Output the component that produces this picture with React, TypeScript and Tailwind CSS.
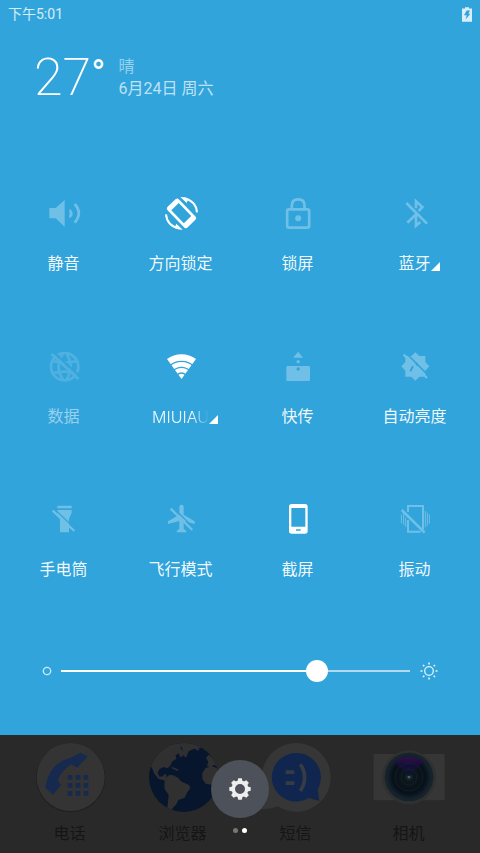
import { useState, type ReactNode } from "react";

type Tile = {
  label: string;
  viewBox: string;
  active?: boolean;
  disabled?: boolean;
  more?: boolean;
  fade?: boolean;
  icon: ReactNode;
};

const tiles: Tile[] = [
  {
    label: "静音",
    viewBox: "78 45 108 108",
    icon: (
      <>
        <path d="M88 84h19l27-24v80l-27-25H88z" fill="currentColor" />
        <path d="M147 88q11 2 11 13t-11 12q4-12 0-25z" fill="currentColor" />
        <path d="M164 72q25 28 0 56" stroke="currentColor" strokeWidth="8" />
      </>
    ),
  },
  {
    label: "方向锁定",
    viewBox: "429 45 108 108",
    active: true,
    icon: (
      <>
        <g transform="rotate(-44 484.500 100)">
          <path
            fill="currentColor"
            fillRule="evenodd"
            d="M468 57h33q7 0 7 7v72q0 7-7 7h-33q-7 0-7-7V64q0-7 7-7zm1 15v54h31V72z"
          />
        </g>
        <path d="M492 55q36 8 39 42" stroke="currentColor" strokeWidth="6" />
        <path d="M481 51q13-1 24 5l-5 13z" fill="currentColor" />
        <path d="M438 103q3 34 39 42" stroke="currentColor" strokeWidth="6" />
        <path d="M488 149q-13 1-24-5l5-13z" fill="currentColor" />
      </>
    ),
  },
  {
    label: "锁屏",
    viewBox: "90 45 108 108",
    icon: (
      <>
        <rect x="111.500" y="88" width="66" height="55" rx="5" stroke="currentColor" strokeWidth="8" />
        <path d="M125.500 85V76q0-18 19-18t19 18v9" stroke="currentColor" strokeWidth="8" />
        <circle cx="144.500" cy="115" r="9" fill="currentColor" />
      </>
    ),
  },
  {
    label: "蓝牙",
    viewBox: "441 45 108 108",
    more: true,
    icon: (
      <path
        d="M469 69l62 62M498 85V64l19 17-11 12M472 128l26-25v34l13-11"
        stroke="currentColor"
        strokeWidth="8"
      />
    ),
  },
  {
    label: "数据",
    viewBox: "78 39 108 108",
    disabled: true,
    icon: (
      <>
        <mask id="globe-cut">
          <rect x="78" y="39" width="108" height="108" fill="#fff" />
          <path d="M100 50l84 78" stroke="#000" strokeWidth="6" />
        </mask>
        <g mask="url(#globe-cut)">
          <path
            stroke="currentColor"
            strokeWidth="8"
            d="M134 54a41 41 0 100 82 41 41 0 000-82zM98 78q36 10 72 0M98 115q36-10 72 0M130 54q-28 41 0 82M138 54q28 41 0 82"
          />
        </g>
        <path d="M95 57l80 75" stroke="currentColor" strokeWidth="8" />
      </>
    ),
  },
  {
    label: "MIUIAU",
    viewBox: "429 39 108 108",
    active: true,
    more: true,
    fade: true,
    icon: (
      <>
        <mask id="wifi-gaps">
          <rect x="429" y="39" width="108" height="108" fill="#fff" />
          <g stroke="#000" strokeWidth="4">
            <circle cx="484.500" cy="132" r="53" />
            <circle cx="484.500" cy="132" r="35" />
            <circle cx="484.500" cy="132" r="18" />
          </g>
        </mask>
        <path mask="url(#wifi-gaps)" d="M484.500 132L441 72a74 74 0 0187 0z" fill="currentColor" />
      </>
    ),
  },
  {
    label: "快传",
    viewBox: "90 39 108 108",
    icon: (
      <>
        <path d="M144.500 50l15 18h-30z" fill="currentColor" />
        <circle cx="144.500" cy="80" r="5" fill="currentColor" />
        <path
          fill="currentColor"
          fillRule="evenodd"
          d="M113 93h63q4 0 4 4v37q0 4-4 4h-63q-4 0-4-4V97q0-4 4-4zm31.500 4a5 5 0 100 10 5 5 0 000-10z"
        />
      </>
    ),
  },
  {
    label: "自动亮度",
    viewBox: "441 39 108 108",
    icon: (
      <>
        <mask id="auto-cut">
          <rect x="441" y="39" width="108" height="108" fill="#fff" />
          <path d="M465 51l76 76" stroke="#000" strokeWidth="5" />
          <path d="M489 93l-8 16M498 83l4 9" stroke="#000" strokeWidth="6" />
        </mask>
        <path
          mask="url(#auto-cut)"
          fill="currentColor"
          d="M496 52l12 11h18v18l12 13-12 13v18h-18l-12 12-12-12h-18v-18l-12-13 12-13V63h18z"
        />
        <path d="M461 59l70 70" stroke="currentColor" strokeWidth="7" />
      </>
    ),
  },
  {
    label: "手电筒",
    viewBox: "78 36 108 108",
    icon: (
      <>
        <mask id="torch-cut">
          <rect x="78" y="36" width="108" height="108" fill="#fff" />
          <path d="M103 60l70 66" stroke="#000" strokeWidth="4" />
        </mask>
        <path
          mask="url(#torch-cut)"
          fill="currentColor"
          d="M112 50h43v8h-43zM112 63h43v8l-8 19v40h-27V90l-8-19z"
        />
        <path d="M98 65l65 61" stroke="currentColor" strokeWidth="7" />
      </>
    ),
  },
  {
    label: "飞行模式",
    viewBox: "429 36 108 108",
    icon: (
      <>
        <mask id="plane-cut">
          <rect x="429" y="36" width="108" height="108" fill="#fff" />
          <path d="M457 54l72 70" stroke="#000" strokeWidth="4" />
        </mask>
        <path
          mask="url(#plane-cut)"
          fill="currentColor"
          d="M478 54q0-7 6.500-7t6.500 7v23l33 20v8l-33-9v23l8 7v4h-29v-4l8-7V96l-34 9v-8l34-20z"
        />
        <path d="M452 59l65 64" stroke="currentColor" strokeWidth="7" />
      </>
    ),
  },
  {
    label: "截屏",
    viewBox: "90 36 108 108",
    active: true,
    icon: (
      <path
        fill="currentColor"
        fillRule="evenodd"
        d="M125 45h40q8 0 8 8v73q0 8-8 8h-40q-8 0-8-8V53q0-8 8-8zm-1 12v56h42V57zm14 64v4h14v-4z"
      />
    ),
  },
  {
    label: "振动",
    viewBox: "441 36 108 108",
    icon: (
      <g stroke="currentColor">
        <path d="M474 69V51h45v70M474 93v35h38" strokeWidth="6" />
        <path d="M455 63l69 68" strokeWidth="8" />
        <path d="M454 77v26M461 72v36M467 86v28M526 66v49M532 71v39M538 77v27" strokeWidth="3" />
      </g>
    ),
  },
];

const dockApps = [
  {
    label: "电话",
    viewBox: "103 51 216 216",
    icon: (
      <>
        <circle cx="213" cy="158" r="104" fill="#212121" />
        <circle cx="213" cy="156" r="102" fill="#343434" />
        <g fill="#16294e">
          <path d="M137 188l23 21 24-29-10-15q12-29 41-47l17 10 32-33-21-12-30 15q-66 16-76 90z" />
          <path d="M204 150h14v14h-14zM228 150h14v14h-14zM252 150h14v14h-14zM204 174h14v14h-14zM228 174h14v14h-14zM252 174h14v14h-14zM204 198h14v14h-14zM228 198h14v14h-14zM252 198h14v14h-14z" />
        </g>
      </>
    ),
  },
  {
    label: "浏览器",
    viewBox: "442 51 216 216",
    icon: (
      <>
        <clipPath id="earth">
          <circle cx="552" cy="157" r="104" />
        </clipPath>
        <g clipPath="url(#earth)">
          <rect x="442" y="51" width="216" height="216" fill="#07162c" />
          <g fill="#303030">
            <path d="M448 125l14-35 26-26 42-12 18 4-6 12 10 12-2 14-8 2-5-11-9 6 2 10-13 9-5 12-9 8-11-4-13 7-5 10 5 12 11-1 5-7 5 2-2 13 15 3 2 8-6 2-17-9-16-5-12-15-6-15-6-10z" />
            <path d="M497 158l12-8 12 1 15 8 8 10 25 12 3 8-10 14-7 15-19 7-6 13-10 10-9 18-6 3-5-8 4-20 3-32-12-16-1-15z" />
            <path d="M537 56l34-5 44 10-12 8-22 3-14 7-8 19-9-9-2-19zM587 73l7-5 6 5-6 4z" />
            <path d="M619 98l9-9 25 24v11l-11-5-8 7-12-3 4-13zM608 144l10-15 18-6 22 9v35l-22 12-18-3-10-14z" />
            <path d="M516 125l15 6 9 5-9 1-15-7z" />
          </g>
        </g>
      </>
    ),
  },
  {
    label: "短信",
    viewBox: "61 51 216 216",
    icon: (
      <>
        <path
          d="M170 54a103 103 0 11-55 190q-22 10-54 7 14-11 16-49A103 103 0 01170 54z"
          fill="#363636"
        />
        <path d="M170 84a73 73 0 0164 109l5 35-31-9A73 73 0 11170 84z" fill="#10264e" />
        <path d="M138 136h26v11h-26zM138 169h26v11h-26z" fill="#363c46" />
        <path d="M182 118q26 39 0 80" stroke="#363c46" strokeWidth="11" />
      </>
    ),
  },
  {
    label: "相机",
    viewBox: "400 51 216 216",
    icon: (
      <>
        <radialGradient id="lens">
          <stop offset="0" stopColor="#20373d" />
          <stop offset=".2" stopColor="#0c171d" />
          <stop offset=".75" stopColor="#081018" />
          <stop offset="1" stopColor="#142330" />
        </radialGradient>
        <linearGradient id="flare" x1="0" y1="0" x2="0" y2="1">
          <stop offset="0" stopColor="#321045" />
          <stop offset=".4" stopColor="#160d3a" />
          <stop offset="1" stopColor="#0b1821" />
        </linearGradient>
        <path d="M402 87h213v139H402z" fill="#363636" />
        <circle cx="508" cy="157" r="81" fill="#303030" />
        <circle cx="508" cy="156" r="73" fill="#17232b" />
        <circle cx="508" cy="156" r="66" fill="url(#lens)" />
        <path d="M508 156l-44-46q44-29 88 0z" fill="url(#flare)" />
        <circle cx="508" cy="156" r="42" stroke="#14242e" strokeWidth="2" />
        <circle cx="508" cy="156" r="24" stroke="#14242e" strokeWidth="2" />
        <circle cx="508" cy="156" r="4" fill="#49605f" />
      </>
    ),
  },
];

const StatusBar = () => (
  <header className="flex h-7 items-center justify-between px-2 text-sm text-white/80">
    <span>下午5:01</span>
    <svg viewBox="0 0 30 44" className="h-[15px] w-[10px]" aria-label="充电中">
      <path d="M9 0h12v4h9v40H0V4h9z" fill="#d8eef9" />
      <path d="M14 10h10l-5 10h6L11 37l3-13H6z" fill="#31a4dc" />
    </svg>
  </header>
);

const Weather = () => (
  <section className="flex items-start gap-[13px] pt-[22px] pl-[34px]">
    <p className="flex items-start leading-[56px] text-white">
      <span className="text-[52px] font-extralight">27</span>
      <span className="text-[38px] leading-[48px]">°</span>
    </p>
    <div className="pt-1.5 text-base leading-[22px]">
      <p className="text-white/50">晴</p>
      <p className="text-white/70">6月24日 周六</p>
    </div>
  </section>
);

const ToggleTile = ({ tile }: { tile: Tile }) => {
  const [on, setOn] = useState(!!tile.active);

  return (
    <button
      type="button"
      aria-pressed={on}
      disabled={tile.disabled}
      onClick={() => setOn(!on)}
      className="flex flex-col items-center gap-[21px]"
    >
      <svg
        viewBox={tile.viewBox}
        fill="none"
        className={`size-9 text-white ${tile.disabled ? "opacity-15" : on ? "" : "opacity-30"}`}
      >
        {tile.icon}
      </svg>
      <span className={`relative leading-6 ${tile.disabled ? "text-white/50" : "text-white/95"}`}>
        <span
          className={
            tile.fade ? "block font-[Inter,sans-serif] font-light mask-r-from-70% mask-r-to-100%" : "block"
          }
        >
          {tile.label}
        </span>
        {tile.more && (
          <svg viewBox="0 0 9 9" className="absolute bottom-[5px] left-full size-[9px] fill-white">
            <path d="M9 0v9H0z" />
          </svg>
        )}
      </span>
    </button>
  );
};

const Brightness = () => {
  const [value, setValue] = useState(75);
  const stop = `calc(11px + (100% - 22px) * ${value / 100})`;

  return (
    <div className="flex h-6 items-center px-[42px] text-white">
      <svg viewBox="0 0 10 10" className="size-[10px] shrink-0" fill="none" stroke="#cdeafa">
        <circle cx="5" cy="5" r="3.700" strokeWidth="1.300" />
      </svg>
      <input
        type="range"
        aria-label="亮度"
        value={value}
        onChange={(e) => setValue(Number(e.target.value))}
        style={{
          backgroundImage: `linear-gradient(to right, #ffffff ${stop}, #b5d9ec ${stop})`,
        }}
        className="mr-[10px] ml-[9px] h-[22px] min-w-0 flex-1 appearance-none bg-[length:100%_2px] bg-center bg-no-repeat [&::-webkit-slider-thumb]:size-[22px] [&::-webkit-slider-thumb]:appearance-none [&::-webkit-slider-thumb]:rounded-full [&::-webkit-slider-thumb]:bg-white"
      />
      <svg viewBox="0 0 18 18" className="size-[18px] shrink-0" fill="none" stroke="#e3f4fc">
        <circle cx="9" cy="9" r="4.300" strokeWidth="1.300" />
        <path
          d="M9 .500v2M9 15.500v2M.500 9h2M15.500 9h2M3 3l1.300 1.300M13.700 13.700L15 15M3 15l1.300-1.300M13.700 4.300L15 3"
          strokeWidth="1.600"
        />
      </svg>
    </div>
  );
};

const Dock = () => (
  <footer className="relative flex-1 bg-[#292929] pt-[7px] pr-[15px] pb-[7px] pl-[13px]">
    <nav className="grid grid-cols-4">
      {dockApps.map((app) => (
        <a key={app.label} href="#" className="flex flex-col items-center gap-2 leading-6 text-[#151515]">
          <svg viewBox={app.viewBox} fill="none" className="size-[72px]">
            {app.icon}
          </svg>
          <span>{app.label}</span>
        </a>
      ))}
    </nav>

    {/* Settings button floats over the dimmed dock */}
    <button
      type="button"
      aria-label="设置"
      className="absolute top-[25px] left-1/2 flex size-[58px] -translate-x-1/2 items-center justify-center rounded-full bg-[#4c515a]"
    >
      <svg viewBox="-12 -12 24 24" className="size-6" fill="none">
        <circle r="6.700" stroke="#eeeeee" strokeWidth="3.400" />
        <g fill="#eeeeee">
          <path id="teeth" d="M-2.600-7.500l.8-3.200h3.600l.8 3.200zM-2.600 7.500l.8 3.200h3.600l.8-3.200zM-7.500-2.600l-3.200.8v3.600l3.200.8zM7.500-2.600l3.200.8v3.600l-3.200.8z" />
          <use href="#teeth" transform="rotate(45)" />
        </g>
      </svg>
    </button>
    <div className="absolute top-[93px] left-1/2 flex -translate-x-1/2 gap-1">
      <i className="size-[5px] rounded-full bg-[#777777]" />
      <i className="size-[5px] rounded-full bg-white" />
    </div>
  </footer>
);

export default function App() {
  return (
    <div className="flex min-h-screen flex-col bg-[#31a4dc] font-[Roboto,'Noto_Sans_CJK_SC',sans-serif] text-base font-normal">
      <StatusBar />
      <Weather />
      <main className="pt-[89px] pb-[52px]">
        <div className="grid grid-cols-4 gap-y-[72px] pr-[7px] pl-[5px]">
          {tiles.map((tile) => (
            <ToggleTile key={tile.label} tile={tile} />
          ))}
        </div>
        <div className="pt-[77px]">
          <Brightness />
        </div>
      </main>
      <Dock />
    </div>
  );
}
